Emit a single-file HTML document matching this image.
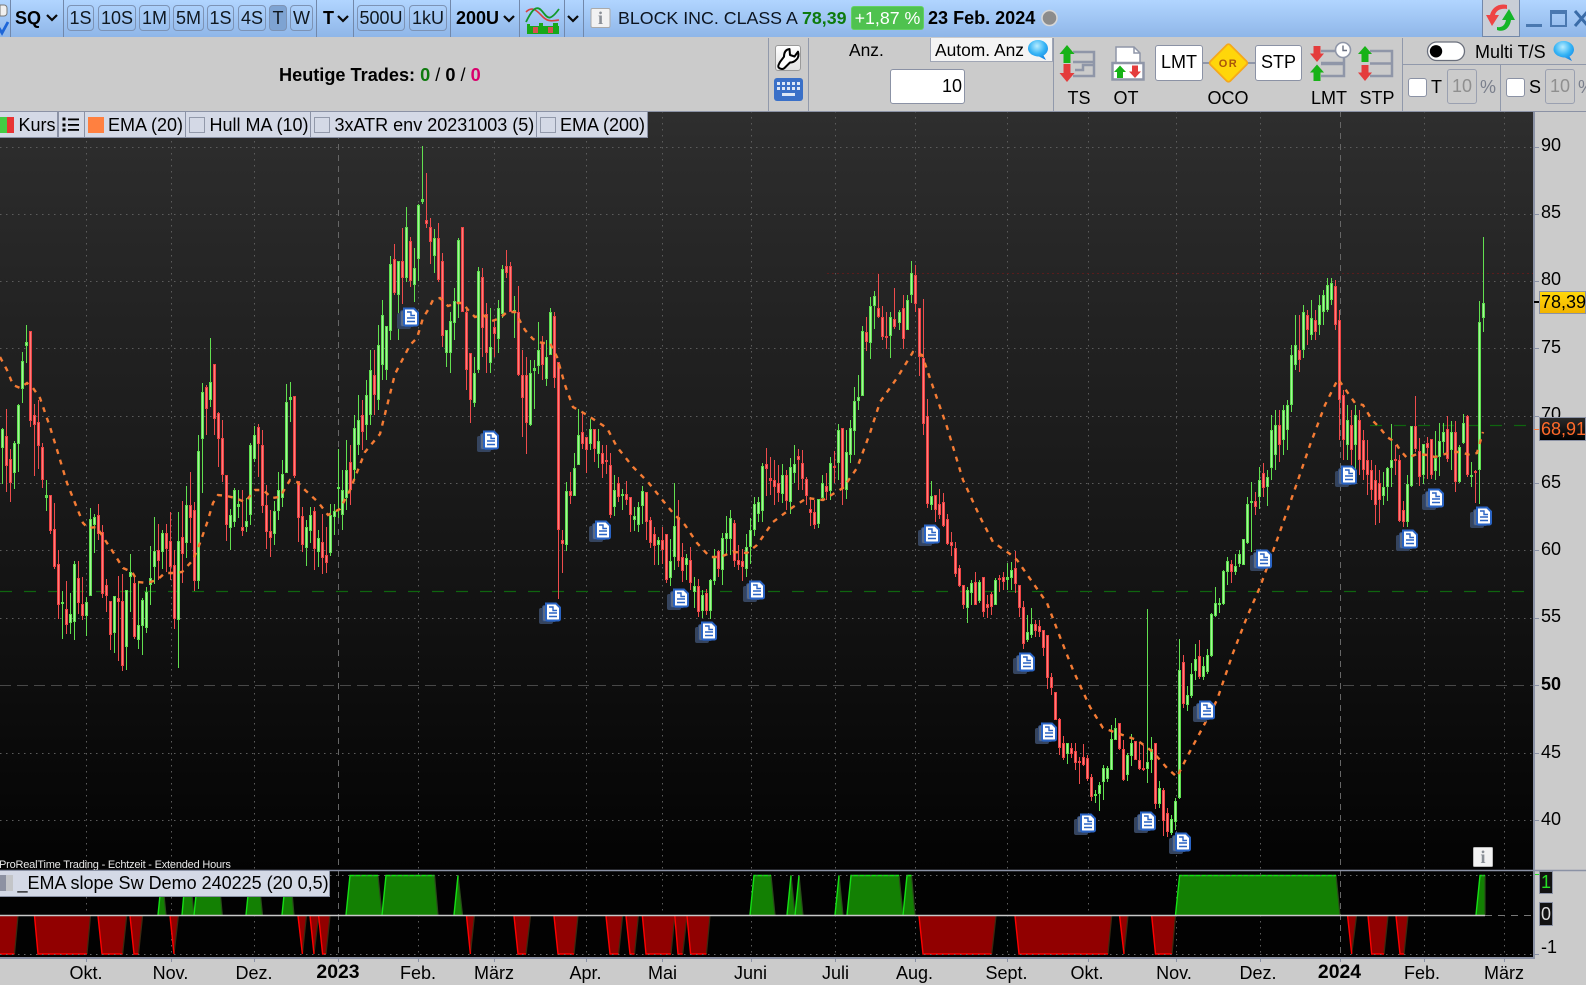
<!DOCTYPE html>
<html lang="de"><head><meta charset="utf-8"><title>ProRealTime</title>
<style>
html,body{margin:0;padding:0;background:#cbcbcb}
body{position:relative;width:1586px;height:985px;overflow:hidden;font-family:"Liberation Sans",Arial,sans-serif;color:#000}
.a{position:absolute;box-sizing:border-box}
.t{position:absolute;white-space:nowrap;font-size:18px;line-height:18px}
.c{transform:translateX(-50%)}
.top{left:0;top:0;width:1586px;height:38px;background:linear-gradient(#b1d5ff,#8fb6e8);border-bottom:1px solid #7288aa}
.sep{position:absolute;width:1px;background:#7288aa}
.b{position:absolute;box-sizing:border-box;top:5px;height:26px;border:1px solid #7d93b5;border-radius:4px;text-align:center;font-size:18px;line-height:24px;color:#101820;background:linear-gradient(#acd0fb,#97bdec)}
.leg{position:absolute;box-sizing:border-box;background:#d4d9e6;border:1px solid #8b92a5}
.chk{position:absolute;box-sizing:border-box;width:16px;height:16px;border:1px solid #9299aa;background:#d4d9e6;top:117px}
.w{position:absolute;box-sizing:border-box;background:#fff;border:1px solid #8b92a5;border-radius:3px;text-align:center;font-size:18px}
.ax{position:absolute;left:1541px;font-size:18px;line-height:18px}
.bt{position:absolute;top:964px;font-size:18px;line-height:18px;white-space:nowrap;transform:translateX(-50%)}
</style></head><body>

<svg class="a" style="left:0;top:0" width="1586" height="985" id="ch" xmlns="http://www.w3.org/2000/svg">
<defs>
<linearGradient id="bg" x1="0" y1="0" x2="0" y2="1"><stop offset="0" stop-color="#2e2e2e"/><stop offset=".5" stop-color="#191919"/><stop offset="1" stop-color="#030303"/></linearGradient>
<radialGradient id="bub" cx=".45" cy=".3" r=".8"><stop offset="0" stop-color="#b8ecff"/><stop offset=".5" stop-color="#35b4f5"/><stop offset="1" stop-color="#0a78e0"/></radialGradient>
<g id="doc">
<rect x="0" y="6" width="14" height="16" rx="2" fill="#35445e"/>
<rect x="3.500" y="3.500" width="14" height="16" rx="2" fill="#5c6b84" stroke="#2f4a7a"/>
<path d="M7 1.500H17L21 5.500V17a1.500 1.500 0 0 1-1.500 1.500H8.500A1.500 1.500 0 0 1 7 17Z" fill="#fff" stroke="#2a64c4" stroke-width="2"/>
<path d="M10 5h4v3.500h4M10 11h8M10 14.500h8" fill="none" stroke="#2a64c4" stroke-width="1.400"/>
</g>
</defs>
<rect x="0" y="111" width="1534" height="759" fill="url(#bg)"/>
<rect x="0" y="870" width="1534" height="88" fill="#020202"/>
<g id="grid"></g>
<path d="M827 273.500H1534" stroke="#5a1c1c" stroke-dasharray="2 3"/>
<path d="M0 591.500H1534" stroke="#0f650f" stroke-width="1.200" stroke-dasharray="12 12"/>
<path d="M1370 425.500H1534" stroke="#0f650f" stroke-width="1.200" stroke-dasharray="12 12"/>
<path d="M0 685.500H1534" stroke="#484848" stroke-dasharray="11 6"/>
<g id="cand" shape-rendering="crispEdges"></g>
<polyline id="ema" fill="none" stroke="#f47b34" stroke-width="2.400" stroke-dasharray="5 6" points=""/>
<g id="docs"></g>
<g id="osc"></g>
<path d="M0 915.500H1485" stroke="#c8c8c8" stroke-width="1.500"/>
<path d="M1485 915.500H1534" stroke="#777" stroke-dasharray="7 6"/>
<path d="M0 875.500H1534M0 954.500H1534" stroke="#666" stroke-dasharray="1.500 4.500"/>
<path d="M0 870.500H1586" stroke="#8b92a5" stroke-width="1.400"/>
<rect x="0" y="957" width="1534" height="2" fill="#8b92a5"/>
<rect x="1533" y="111" width="2" height="848" fill="#8b92a5"/>
</svg>

<!-- top bar -->
<div class="a top" style="height:37.500px"></div>
<div class="sep" style="left:10px;top:0;height:37px"></div>
<div class="sep" style="left:63px;top:0;height:37px"></div>
<div class="sep" style="left:316px;top:0;height:37px"></div>
<div class="sep" style="left:353px;top:0;height:37px"></div>
<div class="sep" style="left:450px;top:0;height:37px"></div>
<div class="sep" style="left:519px;top:0;height:37px"></div>
<div class="sep" style="left:564px;top:0;height:37px"></div>
<div class="sep" style="left:583px;top:0;height:37px"></div>
<div class="t" style="left:15px;top:8.500px;font-weight:bold;font-size:18px">SQ</div>
<div class="b" style="left:67px;width:27px">1S</div>
<div class="b" style="left:98px;width:38px">10S</div>
<div class="b" style="left:139px;width:31px">1M</div>
<div class="b" style="left:173px;width:31px">5M</div>
<div class="b" style="left:207px;width:27px">1S</div>
<div class="b" style="left:238px;width:28px">4S</div>
<div class="b" style="left:269px;width:18px;background:#7ea3d2">T</div>
<div class="b" style="left:290px;width:23px">W</div>
<div class="t" style="left:323px;top:8.500px;font-weight:bold;font-size:18px">T</div>
<div class="b" style="left:357px;width:48px">500U</div>
<div class="b" style="left:409px;width:38px">1kU</div>
<div class="t" style="left:456px;top:8.500px;font-weight:bold;font-size:18px">200U</div>
<div class="t" style="left:618px;top:8.500px;color:#0c1420;font-size:17.800px">BLOCK INC. CLASS A</div>
<div class="t" style="left:802px;top:8.500px;font-weight:bold;color:#0e7a0e;font-size:17.800px">78,39</div>
<div class="a" style="left:851px;top:6px;width:73px;height:24px;background:#4fc24f;border:1px solid #63d063;border-radius:3px;color:#fff;font-size:17.800px;line-height:22px;text-align:center;white-space:nowrap">+1,87 %</div>
<div class="t" style="left:928px;top:8.500px;font-weight:bold;font-size:18.050px">23 Feb. 2024</div>
<div class="a" style="left:1482px;top:0;width:38px;height:37px;background:#c9ced6;border-left:1px solid #7288aa;border-right:1px solid #7288aa;border-bottom:1px solid #7288aa"></div>

<!-- second row -->
<div class="a" style="left:0;top:37px;width:1586px;height:74.500px;background:#cbcbcb;border-bottom:1px solid #8b92a5"></div>
<div class="t" style="left:279px;top:66px;font-weight:bold;font-size:18.150px">Heutige Trades: <span style="color:#0e7a0e">0</span> <span style="font-weight:normal">/</span> 0 <span style="font-weight:normal">/</span> <span style="color:#d9006c">0</span></div>
<div class="sep" style="left:768px;top:38px;height:73px;background:#9199ab"></div>
<div class="sep" style="left:808px;top:38px;height:73px;background:#9199ab"></div>
<div class="sep" style="left:1053px;top:38px;height:73px;background:#9199ab"></div>
<div class="sep" style="left:1402px;top:38px;height:73px;background:#9199ab"></div>
<div class="sep" style="left:1500px;top:64px;height:47px;background:#9199ab"></div>
<div class="a" style="left:1402px;top:64px;width:184px;height:1px;background:#9199ab"></div>
<div class="a" style="left:775px;top:45px;width:26px;height:26px;background:linear-gradient(#fff,#e4e4e4);border:1px solid #9a9a9a;border-radius:3px"></div>
<div class="a" style="left:774px;top:78px;width:29px;height:23px;background:#3a70c8;border-radius:3px"></div>
<div class="t" style="left:849px;top:41px;font-size:17.400px">Anz.</div>
<div class="a" style="left:930px;top:38px;width:123px;height:24px;background:#f4f4f4;border:1px solid #a0a6b5;border-top:none"></div>
<div class="t" style="left:935px;top:41px;font-size:17.400px">Autom. Anz</div>
<div class="w" style="left:890px;top:69px;width:75px;height:35px;line-height:33px;text-align:right;padding-right:2px">10</div>
<div class="w" style="left:1155px;top:45px;width:48px;height:36px;line-height:33px">LMT</div>
<div class="w" style="left:1255px;top:45px;width:47px;height:36px;line-height:33px">STP</div>
<div class="t c" style="left:1079px;top:89px">TS</div>
<div class="t c" style="left:1126px;top:89px">OT</div>
<div class="t c" style="left:1228px;top:89px">OCO</div>
<div class="t c" style="left:1329px;top:89px">LMT</div>
<div class="t c" style="left:1377px;top:89px">STP</div>
<div class="t" style="left:1475px;top:43px">Multi T/S</div>
<div class="a" style="left:1408px;top:78px;width:19px;height:19px;background:#fff;border:1px solid #8b92a5;border-radius:3px"></div>
<div class="t" style="left:1431px;top:78px">T</div>
<div class="a" style="left:1447px;top:69px;width:30px;height:35px;border:1px solid #9aa0b0;border-radius:3px;color:#8f8f8f;font-size:18px;line-height:33px;text-align:center">10</div>
<div class="t" style="left:1480px;top:78px;color:#7a7f8c">%</div>
<div class="a" style="left:1506px;top:78px;width:19px;height:19px;background:#fff;border:1px solid #8b92a5;border-radius:3px"></div>
<div class="t" style="left:1529px;top:78px">S</div>
<div class="a" style="left:1545px;top:69px;width:30px;height:35px;border:1px solid #9aa0b0;border-radius:3px;color:#8f8f8f;font-size:18px;line-height:33px;text-align:center">10</div>
<div class="t" style="left:1578px;top:78px;color:#7a7f8c">%</div>

<!-- price legend -->
<div class="leg" style="left:-2px;top:111px;width:60px;height:27px"></div>
<div class="a" style="left:0;top:117px;width:7px;height:16px;background:#44cc44"></div>
<div class="a" style="left:7px;top:117px;width:7px;height:16px;background:#e83434"></div>
<div class="t" style="left:18.500px;top:116px">Kurs</div>
<div class="leg" style="left:58px;top:111px;width:27px;height:27px"></div>
<div class="leg" style="left:84px;top:111px;width:102px;height:27px"></div>
<div class="a" style="left:88px;top:117px;width:16px;height:16px;background:#ff8040"></div>
<div class="t" style="left:108px;top:116px">EMA (20)</div>
<div class="leg" style="left:185px;top:111px;width:126px;height:27px"></div>
<div class="chk" style="left:189px"></div>
<div class="t" style="left:209.500px;top:116px">Hull MA (10)</div>
<div class="leg" style="left:310px;top:111px;width:227px;height:27px"></div>
<div class="chk" style="left:314px"></div>
<div class="t" style="left:334.500px;top:116px">3xATR env 20231003 (5)</div>
<div class="leg" style="left:536px;top:111px;width:112px;height:27px"></div>
<div class="chk" style="left:540px"></div>
<div class="t" style="left:560px;top:116px">EMA (200)</div>

<!-- overlay icons -->
<svg class="a" style="left:0;top:0;pointer-events:none" width="1586" height="985" xmlns="http://www.w3.org/2000/svg">
<!-- corner check -->
<path d="M0 5h4a3 3 0 0 1 3 3v5a3 3 0 0 1-3 3H0Z" fill="#f0f0f0" stroke="#777"/>
<path d="M-1 28L2 33L8 22" fill="none" stroke="#1e66d8" stroke-width="2.800"/>
<!-- chevrons -->
<g fill="none" stroke="#0a0a0a" stroke-width="2.200"><path d="M47 15l5 5 5-5"/><path d="M338 16l5 5 5-5"/><path d="M504 16l5 5 5-5"/><path d="M568 16l5 5 5-5"/></g>
<!-- chart type icon -->
<g>
<rect x="527" y="26" width="32" height="8" fill="#18a818"/>
<rect x="533" y="27" width="5" height="6" fill="#d85050"/><rect x="548" y="27" width="5" height="6" fill="#d85050"/>
<rect x="527" y="24" width="3" height="3" fill="#18a818"/><rect x="539" y="23" width="4" height="4" fill="#18a818"/><rect x="553" y="23" width="5" height="4" fill="#18a818"/>
<path d="M526 12C533 5 538 12 543 17S553 21 559 20" fill="none" stroke="#d84040" stroke-width="1.600"/>
<path d="M526 22C530 14 535 4 541 10S548 24 559 9" fill="none" stroke="#129a2a" stroke-width="1.800"/>
</g>
<!-- info -->
<rect x="591" y="8.500" width="19" height="19" rx="1.500" fill="#f2f2f2" stroke="#aaa"/>
<text x="600.500" y="24" text-anchor="middle" font-family="Liberation Serif,serif" font-weight="bold" font-size="18" fill="#8a8f96">i</text>
<!-- grey circle -->
<circle cx="1049.500" cy="18" r="7.500" fill="#8c8c8c" stroke="#d8d8d8" stroke-width="1.500"/>
<!-- refresh -->
<path d="M1507 5C1498 3 1492 8 1490 15H1486L1492 26L1499 15H1495C1496 11 1500 8 1507 9Z" fill="#ee4444"/>
<path d="M1497 30C1505 33 1510 27 1511 20H1515L1509 9L1502 20H1506C1505 25 1502 28 1497 27Z" fill="#14b528"/>
<!-- window -->
<rect x="1526" y="24" width="16" height="3" fill="#4a78b0"/>
<rect x="1551" y="11" width="15" height="15" fill="none" stroke="#4a78b0" stroke-width="2"/><rect x="1550" y="10" width="17" height="4" fill="#4a78b0"/>
<path d="M1575 11L1588 26M1588 11L1575 26" stroke="#3a6ca8" stroke-width="3"/>
<!-- wrench -->
<path d="M784 56.700C784 52 786 49.500 789.500 49L790 55L794.500 56.500L798 51.700C799 55 798.500 58 796 60C794 62 792 62.500 790 62.500L784.500 68C782.500 70 778 68.500 778.300 66C778.300 65 779 64 780 62Z" fill="#fff" stroke="#000" stroke-width="2" stroke-linejoin="round"/>
<!-- keyboard -->
<g fill="#dce6f6"><rect x="777" y="82" width="3" height="3"/><rect x="782" y="82" width="3" height="3"/><rect x="787" y="82" width="3" height="3"/><rect x="792" y="82" width="3" height="3"/><rect x="797" y="82" width="3" height="3"/>
<rect x="777" y="87" width="3" height="3"/><rect x="782" y="87" width="3" height="3"/><rect x="787" y="87" width="3" height="3"/><rect x="792" y="87" width="3" height="3"/><rect x="797" y="87" width="3" height="3"/>
<rect x="782" y="93" width="13" height="3"/></g>
<!-- bubbles -->
<g fill="url(#bub)"><path d="M1038 40c6 0 10 4 10 8.500 0 3-2 5.500-4.500 7L1046 60l-7-3.500c-6 0-11-3.500-11-8s4-8.500 10-8.500Z"/>
<path d="M1563.500 41c6 0 10.500 4 10.500 8.500 0 3-2 5.500-4.500 7L1572 61l-7-3.500c-6 0-11.500-3.500-11.500-8s4-8.500 10-8.500Z"/></g>
<!-- TS -->
<g fill="none" stroke="#8f96a8" stroke-width="2.500"><path d="M1073 52H1094V76H1073M1073 62H1094M1075 70H1083V65H1094"/></g>
<path d="M1067 45l7.500 9h-4v9h-7v-9h-4Z" fill="#17b217"/><path d="M1067 82l7.500-9h-4v-9h-7v9h-4Z" fill="#e43c3c"/>
<!-- OT -->
<path d="M1116 47H1134L1140 53V63H1116Z" fill="#fff" stroke="#8f96a8" stroke-width="1.500"/><path d="M1134 47V53H1140" fill="none" stroke="#8f96a8" stroke-width="1.500"/>
<rect x="1112.500" y="63" width="31" height="16.500" fill="#fff" stroke="#8f96a8" stroke-width="2.500"/>
<path d="M1120 65.500l6 6.500h-3V78h-6v-6h-3Z" fill="#17b217"/><path d="M1135 78l6-6.500h-3V65.500h-6v6h-3Z" fill="#e43c3c"/>
<!-- OCO -->
<path d="M1203 63h6M1248 63h7" stroke="#8f96a8" stroke-width="2"/>
<rect x="1214.500" y="49" width="28" height="28" rx="2.500" transform="rotate(45 1228.500 63)" fill="#ffd60a" stroke="#f5a81c" stroke-width="1.800"/>
<text x="1228.500" y="67" text-anchor="middle" font-family="Liberation Sans,sans-serif" font-weight="bold" font-size="11" letter-spacing="1.500" fill="#a8560a">OR</text>
<!-- LMT icon -->
<g fill="none" stroke="#8f96a8" stroke-width="2.500"><path d="M1321 51H1344V76H1321"/></g>
<path d="M1321 63.500H1344" stroke="#8f96a8" stroke-width="3.500"/>
<path d="M1317 62l7-8.500h-3.500V46h-7v7.500H1310Z" fill="#e43c3c"/><path d="M1317 64.500l7 8h-3.500V81h-7v-8.500H1310Z" fill="#17b217"/>
<circle cx="1343" cy="50" r="7.500" fill="#fff" stroke="#8f96a8" stroke-width="1.600"/><path d="M1343 45.500v5h4" fill="none" stroke="#6a7080" stroke-width="1.400"/>
<!-- STP icon -->
<g fill="none" stroke="#8f96a8" stroke-width="2.500"><path d="M1370 51H1392V76H1370M1370 63.500H1392"/></g>
<path d="M1365 46l7 8h-3.500V62h-7v-8H1358Z" fill="#17b217"/><path d="M1365 81l7-8.500h-3.500V65h-7v7.500H1358Z" fill="#e43c3c"/>
<!-- toggle -->
<rect x="1427.500" y="42" width="37" height="18.500" rx="9.200" fill="#fff" stroke="#6a6f7c" stroke-width="1.300"/><circle cx="1436" cy="51.300" r="6.200" fill="#000"/>
<!-- list icon -->
<g fill="#000"><rect x="62.500" y="117.500" width="3" height="3"/><rect x="62.500" y="123.500" width="3" height="3"/><rect x="62.500" y="128.500" width="3" height="3"/><rect x="68" y="118.500" width="11" height="1.800"/><rect x="68" y="124" width="11" height="1.800"/><rect x="68" y="129" width="11" height="1.800"/></g>
<!-- chart info -->
<rect x="1473.500" y="847.500" width="19" height="19" rx="1" fill="#f2f2f2" stroke="#bbb"/>
<text x="1483" y="863" text-anchor="middle" font-family="Liberation Serif,serif" font-weight="bold" font-size="18" fill="#8a8f96">i</text>
</svg>

<!-- price axis -->
<div class="ax" style="top:136px">90</div>
<div class="ax" style="top:203px">85</div>
<div class="ax" style="top:270px">80</div>
<div class="ax" style="top:338px">75</div>
<div class="ax" style="top:405px">70</div>
<div class="ax" style="top:473px">65</div>
<div class="ax" style="top:540px">60</div>
<div class="ax" style="top:607px">55</div>
<div class="ax" style="top:675px;font-weight:bold">50</div>
<div class="ax" style="top:743px">45</div>
<div class="ax" style="top:810px">40</div>
<div class="a" style="left:1539px;top:291px;width:47px;height:23px;background:linear-gradient(#ffd80a,#f2b400);border:1px solid #8b92a5;font-size:18px;line-height:21px;padding-left:1px">78,39</div>
<div class="a" style="left:1534px;top:301px;width:5px;height:2px;background:#000"></div>
<div class="a" style="left:1539px;top:417px;width:47px;height:24px;background:linear-gradient(#2a2a2a,#000);border:1px solid #8b92a5;font-size:18px;line-height:22px;padding-left:1px;color:#ff6a2a">68,91</div>
<div class="a" style="left:1534px;top:429px;width:5px;height:1px;background:#ff8040"></div>

<!-- oscillator labels -->
<div class="t" style="left:-1px;top:859px;font-size:11px;letter-spacing:-.2px;line-height:12px;color:#e8e8e8">ProRealTime Trading - Echtzeit - Extended Hours</div>
<div class="leg" style="left:-2px;top:870px;width:332px;height:27px"></div>
<div class="a" style="left:0;top:875px;width:6px;height:16px;background:#8d92a2"></div>
<div class="a" style="left:6px;top:875px;width:7px;height:16px;background:#c3c5c8"></div>
<div class="t" style="left:17.500px;top:874px">_EMA slope Sw Demo 240225 (20 0,5)</div>
<div class="a" style="left:1539px;top:871px;width:14px;height:23px;background:#121212;border:1px solid #8b92a5;color:#25e025;font-size:18px;line-height:21px;text-align:center">1</div>
<div class="a" style="left:1539px;top:902px;width:14px;height:24px;background:#121212;border:1px solid #8b92a5;color:#ddd;font-size:18px;line-height:22px;text-align:center">0</div>
<div class="ax" style="left:1541px;top:938px">-1</div>
<div class="a" style="left:1535px;top:874px;width:4px;height:1px;background:#25e025"></div>
<div class="a" style="left:1535px;top:954px;width:4px;height:1px;background:#8b92a5"></div>

<!-- time axis -->
<div class="bt" style="left:86px">Okt.</div>
<div class="bt" style="left:170.500px">Nov.</div>
<div class="bt" style="left:254px">Dez.</div>
<div class="bt" style="left:338px;top:962px;font-weight:bold;font-size:19.400px;line-height:20px">2023</div>
<div class="bt" style="left:418px">Feb.</div>
<div class="bt" style="left:494px">März</div>
<div class="bt" style="left:585.500px">Apr.</div>
<div class="bt" style="left:662.500px">Mai</div>
<div class="bt" style="left:750.500px">Juni</div>
<div class="bt" style="left:835.500px">Juli</div>
<div class="bt" style="left:914.500px">Aug.</div>
<div class="bt" style="left:1006.500px">Sept.</div>
<div class="bt" style="left:1087px">Okt.</div>
<div class="bt" style="left:1174px">Nov.</div>
<div class="bt" style="left:1258px">Dez.</div>
<div class="bt" style="left:1339.500px;top:962px;font-weight:bold;font-size:19.400px;line-height:20px">2024</div>
<div class="bt" style="left:1422px">Feb.</div>
<div class="bt" style="left:1504px">März</div>

<script>
(function(){
var NS="http://www.w3.org/2000/svg";
function el(n,a,p){var e=document.createElementNS(NS,n);for(var k in a)e.setAttribute(k,a[k]);p.appendChild(e);return e}
/* grid */
var g=document.getElementById("grid"),vx=[86,170.5,254,418,494,585.5,662,750.5,835,915,1007,1087.5,1175.5,1260,1424,1504],vd=[338,1340],hy=[146.7,214,281.3,348.3,416,483.3,550.3,618,753,820.3];
vx.forEach(function(x){x=Math.round(x)+.5;el("path",{d:"M"+x+" 111V958",stroke:"#5c5c5c","stroke-dasharray":"1.5 4.5"},g);el("path",{d:"M"+x+" 958v4",stroke:"#8b92a5"},g)});
vd.forEach(function(x){x=x+.5;el("path",{d:"M"+x+" 111V958",stroke:"#666","stroke-dasharray":"6 5"},g);el("path",{d:"M"+x+" 958v4",stroke:"#8b92a5"},g)});
hy.forEach(function(y){y=Math.round(y)+.5;el("path",{d:"M0 "+y+"H1534",stroke:"#5c5c5c","stroke-dasharray":"1.5 4.5"},g);el("path",{d:"M1535 "+y+"h4",stroke:"#8b92a5"},g)});
el("path",{d:"M1535 685.5h4",stroke:"#8b92a5"},g);
/* candles */
var segs=[
[0,320,3,"g327 383 325 492,r348 437 267 515,r417 488 388 545,g369 458 363 507,g254 371 252 456,g123 207 96 249,g66 78 15 130,r33 303 33 320,r285 315 252 467,r306 377 240 447,r381 480 370 503,g525 533 480 572,r525 633 525 642,r627 741 549 747,r732 855 690 896,g846 852 813 956,r867 915 783 941,g882 909 820 942,g732 906 724 959,r774 849 724 882,r852 888 771 899,g846 888 831 948,g597 828 564 828,g591 615 583 698,r585 642 552 660,r636 822 615 833,r795 828 777 876,r843 945 843 990,g828 939 828 998,r834 846 768 1024,r843 1038 762 1052,g810 981 810 1050,g756 771 702 876,r789 951 765 957,g915 960 783 987,g840 918 834 1005,g816 924 800 938,g774 795 678 855,g693 741 591 792,r690 723 612 780,g639 696 630 747,r639 687 612 756,r663 741 576 780,r735 897 690 927,g663 900 576 1044,r651 702 543 790,g555 669 498 715,r555 594 456 670,r570 783 545 813,g393 783 345 807,g216 357 189 519,r201 267 195 345,g186 240 54 260,r132 297 132 345,r279 357 276 441,r354 465 300 486,r465 615 465 663,g585 624 567 690,g510 606 504 621,g552 561 510 594,r621 633 510 648,g603 621 534 636,g375 585 369 615,g345 417 318 426,r321 372 312 471,r375 558 330 580,r555 636 495 687,r633 654 570 711,g573 642 543 675,g510 573 456 600,g462 534 420 560,g246 459 192 460,g231 240 186 306,r228 468 228 475,r483 594 483 666,r588 675 561 696,g621 684 600 738,g585 633 560 670,r573 687 560 750,g654 696 630 742,r666 714 582 762,r705 729 620 759,g585 699 552 708,g573 591 553 645,g501 507 387 595"],
[85,0,1,"g490 515 470 530,g470 498 440 510,r462 490 445 505,g428 470 415 480,g420 445 395 455,r415 432 400 450,g395 425 380 440,g370 415 350 425,r375 395 350 415,g345 400 325 410,g315 365 300 380"],
[96,140,3,"g558 690 558 720,g372 573 348 600,r357 459 312 465,g363 465 363 600,r363 414 264 492,g261 414 201 426,r303 423 291 441,g384 435 324 486,g195 357 192 423,g177 186 18 192,r240 252 99 264,r261 306 235 372,g294 348 267 399,r294 420 249 426,r363 588 339 620,g570 640 570 680,g543 640 516 700,g483 549 444 600,g300 489 294 534,r261 516 261 516,r516 690 501 750,r640 780 640 850,g700 790 650 800,g393 690 381 700,r411 564 384 650,r522 640 489 700,g620 670 504 700,r561 582 540 650,g504 597 480 640"],
[125,250,3,"g57 192 45 205,r48 69 0 84,r48 186 36 186,g180 186 138 264,r186 375 108 378,r375 444 300 561,r375 519 320 612,g369 526 330 528,g354 363 330 477,g300 348 216 372,r276 345 258 390,g321 387 270 408,g186 315 174 315,r198 384 186 414,r336 840 336 1047,r870 882 840 969,g723 885 696 903,r723 738 666 762,g654 738 609 738,g555 645 477 645,r546 582 486 597,r561 600 561 669,g537 582 507 600,r537 597 537 636,g573 612 537 654,r609 642 585 684,r630 636 585 672,r645 795 609 804,g720 771 675 798,r699 741 681 756,g732 735 717 780,r732 750 693 765,r741 795 741 846,g798 810 771 843,g771 825 756 846,g723 768 708 822,r726 816 726 870,r810 879 801 894,r852 888 831 945,g870 885 861 945,r870 900 831 942,r852 990 852 1000,g933 984 867 1008,g828 921 700 960,r801 933 750 950,r921 963 880 995,g924 945 912 990,r930 999 891 1020,g1008 1026 981 1075,r1008 1086 987 1100,g1035 1083 1020 1104,r1029 1083 1017 1095,g990 1083 987 1107,g921 993 897 1005,r903 957 900 980,g864 960 849 1005,g849 867 798 915,g804 867 780 915,r819 933 810 950,r930 945 885 960,r933 951 897 993,g891 957 852 981,g840 891 804 942,g762 840 741 858,g756 792 741 816,g648 783 639 816,r642 657 594 738,r684 693 621 735,r690 711 630 765,r699 729 645 756,g675 732 642 760,r675 753 660 780,g651 756 624 792,g642 669 585 700,r618 630 597 720,r639 687 600 720,r687 738 680 765,r777 789 740 828,r786 825 750 837,g747 822 747 834,g699 744 675 750,r708 726 669 750,g639 723 621 750,r648 654 603 700,g540 639 522 690,r534 717 534 765,g606 720 540 747,g534 615 510 640,g453 543 411 616,g441 453 375 480,g243 438 228 438,r246 276 201 303,g168 279 141 327,g138 168 123 237,r174 201 72 204,r201 261 168 270,r258 264 186 297,g201 258 186 324,r207 231 114 237,g186 219 180 240,r174 267 135 297,g150 240 135 240,g69 135 33 159,r75 162 45 186,r174 321 174 378,r324 522 147 555,r498 762 447 774,g738 765 693 780,r735 780 735 816,r762 795 717 807,r756 828 729 831,r807 882 792 885,r876 888 846 918,r894 972 876 981,r954 1008 945 1010,r1005 1065 1005 1077,g1020 1074 1011 1118,g999 1029 990 1065,r996 1065 966 1065,g996 1053 990 1060,r981 1086 981 1100,r1062 1074 1035 1105,r1032 1071 1026 1095,g990 1065 984 1065"],
[249,480,3,"r295 299 285 335,r291 307 275 330,g291 300 250 330,g270 294 245 330,r264 312 212 338,r315 384 315 410,r381 492 363 507,g456 480 405 485,g432 465 385 475,r432 453 420 470,r438 456 420 470,r450 503 450 528,r465 594 465 628,r591 624 580 645,r636 720 636 720,r717 804 715 825,r789 834 769 840,g789 822 789 852,r804 822 790 835,r813 849 790 870,r843 846 830 912,r831 855 793 858,r834 897 826 902,r891 951 882 963,g942 948 930 970,g915 942 906 993,g864 906 855 960,g864 897 858 906,g777 870 735 870,g744 780 715 780,r729 807 729 810,r807 900 781 903,g825 885 819 903,g789 828 762 858,r783 840 783 840,r840 867 790 870,r864 867 796 873,g846 867 388 909,g807 840 771 880,r789 972 789 987,g924 972 904 985,r930 1023 925 1068,r999 1056 984 1071,g1017 1059 1005 1065,g963 1026 954 1050,g570 954 477 957,r546 672 525 684,g645 675 618 693,g582 648 549 654,g537 573 492 600,r528 591 480 597,g558 591 531 600,g525 576 507 582,g402 528 399 530,g369 408 321 411,g369 372 354 400,g273 372 270 375,g243 276 231 315,r252 276 240 310,g258 276 222 285,g222 252 210 260,g177 255 177 255,g72 189 51 192,g63 69 6 216,r63 81 36 105,g0 51 -40 87,r-20 24 -50 50,g-10 21 -30 78"],
[317,0,1,"g430 468 415 480,g425 455 410 470,r425 445 410 462,g410 440 405 455,g405 430 400 450,g355 405 345 412,g345 365 315 370,r350 360 315 372,g312 350 305 358,r315 330 310 345,g318 335 300 340,r320 332 310 340,g305 325 295 335,g295 312 290 325,g285 310 278 312,g283 300 278 305,r286 325 280 330,r320 400 310 440,r395 440 390 460,g420 445 405 460,r425 450 410 465,g415 445 405 470,r420 460 410 475,r440 470 430 480,r460 475 440 495,r470 490 460 500,r480 505 465 525,r483 500 470 523"],
[345,220,3,"g800 828 755 855,g745 800 742 843,g720 745 612 800,r718 722 675 765,r720 902 705 905,r870 905 842 920,g792 905 765 920,g618 798 618 802,r618 687 528 695,r693 770 655 797,g672 765 672 792,r669 683 651 778,r657 765 657 778,g714 753 632 780,g663 711 610 768,g636 666 610 700,r627 717 588 725,g636 690 603 750,r636 785 603 815,g681 786 675 790,g610 670 582 672,r588 765 585 770,g765 771 726 802,r753 759 750 850,g306 750 243 852,g250 293 50 335"]
];
var P={gw:"",rw:"",gb:"",rb:"",gi:"",ri:""};
segs.forEach(function(s){s[3].split(",").forEach(function(c,i){
 var col=c[0],v=c.slice(1).split(" ").map(function(n){return s[1]+(+n)/s[2]});
 var k=s[0]+i,cx=Math.round(2.33+4.003*k-.5);
 P[col+"w"]+="M"+cx+" "+Math.round(v[2])+"h1V"+Math.round(Math.max(v[3],v[1]))+"h-1Z";
 var t=Math.round(v[0]),b=Math.max(Math.round(v[1]),t+2);
 P[col+"b"]+="M"+(cx-1)+" "+t+"h3V"+b+"h-3Z";
 if(b-t>3)P[col+"i"]+="M"+cx+" "+(t+1)+"h1V"+(b-1)+"h-1Z";
})});
var cg=document.getElementById("cand");
el("path",{d:P.gw,fill:"#62e050"},cg);el("path",{d:P.rw,fill:"#ee4c4c"},cg);
el("path",{d:P.gb,fill:"#5fe050"},cg);el("path",{d:P.rb,fill:"#ee4444"},cg);
el("path",{d:P.gi,fill:"#a6f59a"},cg);el("path",{d:P.ri,fill:"#ff7c7c"},cg);
/* ema */
document.getElementById("ema").setAttribute("points","0,357 7,370 13,385 20,388 27,383 33,388 40,398 50,427 58,453 67,483 75,503 83,523 88,528 97,527 103,537 113,552 123,568 132,572 138,582 147,583 157,580 165,573 173,573 182,572 193,560 200,543 207,523 213,503 218,495 227,496 235,498 245,502 255,490 263,490 272,498 280,497 290,480 297,482 305,490 318,502 328,515 340,509 350,490 365,452 380,434 395,374 410,345 417,338 423,318 428,310 433,300 440,298 448,306 457,303 463,303 468,310 475,317 483,315 492,321 500,318 507,312 515,312 525,330 533,339 542,343 550,343 557,357 565,385 573,407 582,412 590,417 607,428 617,447 633,467 648,482 660,497 673,513 685,525 697,543 710,557 720,557 733,552 747,553 757,545 773,522 793,507 807,498 823,500 843,488 857,468 870,433 880,402 897,378 913,352 922,355 933,387 947,427 963,480 980,517 993,542 1010,554 1017,560 1033,583 1047,603 1060,637 1073,670 1090,707 1103,728 1117,733 1137,740 1153,752 1167,768 1177,777 1187,757 1203,727 1217,700 1233,653 1247,617 1260,587 1277,540 1297,483 1310,445 1325,405 1338,379 1355,403 1363,405 1372,420 1380,428 1387,437 1395,442 1400,450 1407,458 1417,454 1427,455 1435,457 1452,452 1460,452 1470,455 1477,453 1483,432");
/* doc icons */
var dg=document.getElementById("docs");
[[408,318],[488,441],[550,613],[600,531],[678,599],[706,632],[754,591],[929,535],[1024,663],[1046,733],[1085,824],[1145,822],[1180,843],[1204,711],[1261,560],[1346,476],[1407,540],[1433,499],[1481,517]].forEach(function(c){
 el("use",{href:"#doc",x:c[0]-11,y:c[1]-11},dg)});
/* oscillator */
var o=document.getElementById("osc");
var G=[[158,162,162,166],[182,185.5,190,194],[194,198,218.6,222.3],[246,250,258.4,262.5],[282,286,290.5,294],[346,350,378,382],[382,386,434.5,438],[454,458,458,462.5],[750,754,771,775],[787,791,791,795],[795,799,799,803],[835,839,839,843],[847,851,899,903],[903,907,911.5,915],[1175.5,1179.6,1336,1340],[1476,1480,1485,1485]];
var R=[[-6,-6,14.5,18],[34.5,38,87,90.5],[98,102,122.6,126.7],[130,134,138.5,142.6],[170,174,174,178.4],[298,302.4,302.4,306.4],[310,314,314,318.6],[318.6,322.6,326,330],[466.5,470.4,470.4,474.4],[514,518,526,530.5],[554,558,574,578],[606,610,618.6,622.6],[626,630,634.5,638.4],[642.4,646,671,674.8],[674.8,678,682.7,687],[687,690.6,706.4,710],[919,923,991.7,996],[1015,1019,1108,1111.7],[1119.6,1124,1124,1128],[1151.7,1155.5,1172,1175.5],[1347.6,1351.7,1351.7,1356.5],[1368,1371.7,1384,1388],[1396,1400,1404,1408]];
G.forEach(function(a){var p=a[0]+",915 "+a[1]+",875 "+a[2]+",875 "+a[3]+",915";
 el("polygon",{points:p,fill:"#138003"},o);
 el("polyline",{points:a[3]+",915 "+a[2]+",875",fill:"none",stroke:"#2a4a1a","stroke-width":1.2},o);
 el("polyline",{points:a[0]+",915 "+a[1]+",875.5 "+a[2]+",875.5",fill:"none",stroke:"#14e014","stroke-width":1.4},o)});
R.forEach(function(a){var p=a[0]+",916 "+a[1]+",954 "+a[2]+",954 "+a[3]+",916";
 el("polygon",{points:p,fill:"#910000"},o);
 el("polyline",{points:a[3]+",916 "+a[2]+",954",fill:"none",stroke:"#3a2a10","stroke-width":1.2},o);
 el("polyline",{points:a[0]+",916 "+a[1]+",954 "+a[2]+",954",fill:"none",stroke:"#ff0000","stroke-width":1.4},o)});
})();
</script>
</body></html>
